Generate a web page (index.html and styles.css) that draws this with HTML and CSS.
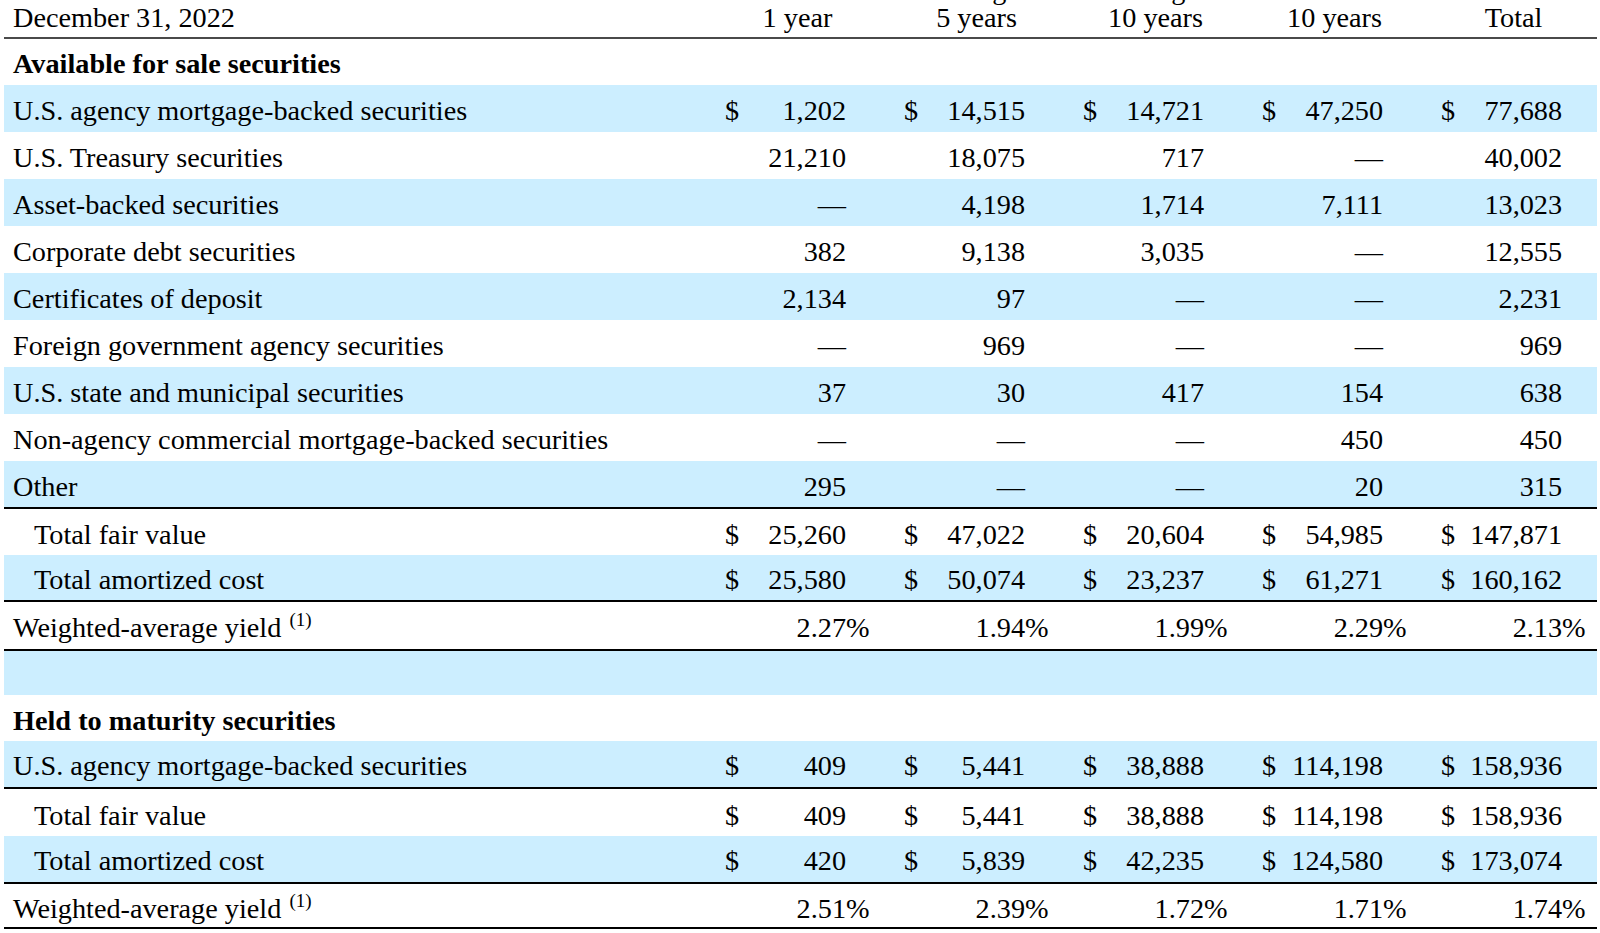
FILE: index.html
```html
<!DOCTYPE html>
<html lang="en">
<head>
<meta charset="utf-8">
<title>Investment securities maturities</title>
<link rel="stylesheet" href="styles.css">
</head>
<body>
<div class="sheet">
<table class="fin">
<colgroup>
<col class="c-lbl">
<col class="c-cur"><col class="c-num"><col class="c-pct">
<col class="c-cur"><col class="c-num"><col class="c-pct">
<col class="c-cur"><col class="c-num"><col class="c-pct">
<col class="c-cur"><col class="c-num"><col class="c-pct">
<col class="c-cur"><col class="c-num"><col class="c-pct-last">
</colgroup>
<thead>
<tr>
<th class="hd-lbl">December 31, 2022</th>
<th class="hd" colspan="3">Within<br>1 year</th>
<th class="hd" colspan="3">After 1 year<br>through<br>5 years</th>
<th class="hd" colspan="3">After 5 years<br>through<br>10 years</th>
<th class="hd" colspan="3">After<br>10 years</th>
<th class="hd hd-last" colspan="3">Total</th>
</tr>
</thead>
<tbody>
<tr class="r-sec"><td class="lbl b" colspan="16">Available for sale securities</td></tr>
<tr class="hl"><td class="lbl">U.S. agency mortgage-backed securities</td>
<td class="cur">$</td><td class="num">1,202</td><td class="pct"></td>
<td class="cur">$</td><td class="num">14,515</td><td class="pct"></td>
<td class="cur">$</td><td class="num">14,721</td><td class="pct"></td>
<td class="cur">$</td><td class="num">47,250</td><td class="pct"></td>
<td class="cur">$</td><td class="num">77,688</td><td class="pct"></td></tr>
<tr><td class="lbl">U.S. Treasury securities</td>
<td class="cur"></td><td class="num">21,210</td><td class="pct"></td>
<td class="cur"></td><td class="num">18,075</td><td class="pct"></td>
<td class="cur"></td><td class="num">717</td><td class="pct"></td>
<td class="cur"></td><td class="num">—</td><td class="pct"></td>
<td class="cur"></td><td class="num">40,002</td><td class="pct"></td></tr>
<tr class="hl"><td class="lbl">Asset-backed securities</td>
<td class="cur"></td><td class="num">—</td><td class="pct"></td>
<td class="cur"></td><td class="num">4,198</td><td class="pct"></td>
<td class="cur"></td><td class="num">1,714</td><td class="pct"></td>
<td class="cur"></td><td class="num">7,111</td><td class="pct"></td>
<td class="cur"></td><td class="num">13,023</td><td class="pct"></td></tr>
<tr><td class="lbl">Corporate debt securities</td>
<td class="cur"></td><td class="num">382</td><td class="pct"></td>
<td class="cur"></td><td class="num">9,138</td><td class="pct"></td>
<td class="cur"></td><td class="num">3,035</td><td class="pct"></td>
<td class="cur"></td><td class="num">—</td><td class="pct"></td>
<td class="cur"></td><td class="num">12,555</td><td class="pct"></td></tr>
<tr class="hl"><td class="lbl">Certificates of deposit</td>
<td class="cur"></td><td class="num">2,134</td><td class="pct"></td>
<td class="cur"></td><td class="num">97</td><td class="pct"></td>
<td class="cur"></td><td class="num">—</td><td class="pct"></td>
<td class="cur"></td><td class="num">—</td><td class="pct"></td>
<td class="cur"></td><td class="num">2,231</td><td class="pct"></td></tr>
<tr><td class="lbl">Foreign government agency securities</td>
<td class="cur"></td><td class="num">—</td><td class="pct"></td>
<td class="cur"></td><td class="num">969</td><td class="pct"></td>
<td class="cur"></td><td class="num">—</td><td class="pct"></td>
<td class="cur"></td><td class="num">—</td><td class="pct"></td>
<td class="cur"></td><td class="num">969</td><td class="pct"></td></tr>
<tr class="hl"><td class="lbl">U.S. state and municipal securities</td>
<td class="cur"></td><td class="num">37</td><td class="pct"></td>
<td class="cur"></td><td class="num">30</td><td class="pct"></td>
<td class="cur"></td><td class="num">417</td><td class="pct"></td>
<td class="cur"></td><td class="num">154</td><td class="pct"></td>
<td class="cur"></td><td class="num">638</td><td class="pct"></td></tr>
<tr><td class="lbl">Non-agency commercial mortgage-backed securities</td>
<td class="cur"></td><td class="num">—</td><td class="pct"></td>
<td class="cur"></td><td class="num">—</td><td class="pct"></td>
<td class="cur"></td><td class="num">—</td><td class="pct"></td>
<td class="cur"></td><td class="num">450</td><td class="pct"></td>
<td class="cur"></td><td class="num">450</td><td class="pct"></td></tr>
<tr class="hl rule r-other"><td class="lbl">Other</td>
<td class="cur"></td><td class="num">295</td><td class="pct"></td>
<td class="cur"></td><td class="num">—</td><td class="pct"></td>
<td class="cur"></td><td class="num">—</td><td class="pct"></td>
<td class="cur"></td><td class="num">20</td><td class="pct"></td>
<td class="cur"></td><td class="num">315</td><td class="pct"></td></tr>
<tr class="r-tfv"><td class="lbl ind">Total fair value</td>
<td class="cur">$</td><td class="num">25,260</td><td class="pct"></td>
<td class="cur">$</td><td class="num">47,022</td><td class="pct"></td>
<td class="cur">$</td><td class="num">20,604</td><td class="pct"></td>
<td class="cur">$</td><td class="num">54,985</td><td class="pct"></td>
<td class="cur">$</td><td class="num">147,871</td><td class="pct"></td></tr>
<tr class="hl rule r-tac"><td class="lbl ind">Total amortized cost</td>
<td class="cur">$</td><td class="num">25,580</td><td class="pct"></td>
<td class="cur">$</td><td class="num">50,074</td><td class="pct"></td>
<td class="cur">$</td><td class="num">23,237</td><td class="pct"></td>
<td class="cur">$</td><td class="num">61,271</td><td class="pct"></td>
<td class="cur">$</td><td class="num">160,162</td><td class="pct"></td></tr>
<tr class="rule r-way"><td class="lbl">Weighted-average yield <sup class="fn">(1)</sup></td>
<td class="cur"></td><td class="num">2.27</td><td class="pct">%</td>
<td class="cur"></td><td class="num">1.94</td><td class="pct">%</td>
<td class="cur"></td><td class="num">1.99</td><td class="pct">%</td>
<td class="cur"></td><td class="num">2.29</td><td class="pct">%</td>
<td class="cur"></td><td class="num">2.13</td><td class="pct">%</td></tr>
<tr class="hl r-gap"><td colspan="16"></td></tr>
<tr class="r-sec2"><td class="lbl b" colspan="16">Held to maturity securities</td></tr>
<tr class="hl rule r-htm"><td class="lbl">U.S. agency mortgage-backed securities</td>
<td class="cur">$</td><td class="num">409</td><td class="pct"></td>
<td class="cur">$</td><td class="num">5,441</td><td class="pct"></td>
<td class="cur">$</td><td class="num">38,888</td><td class="pct"></td>
<td class="cur">$</td><td class="num">114,198</td><td class="pct"></td>
<td class="cur">$</td><td class="num">158,936</td><td class="pct"></td></tr>
<tr class="r-tfv2"><td class="lbl ind">Total fair value</td>
<td class="cur">$</td><td class="num">409</td><td class="pct"></td>
<td class="cur">$</td><td class="num">5,441</td><td class="pct"></td>
<td class="cur">$</td><td class="num">38,888</td><td class="pct"></td>
<td class="cur">$</td><td class="num">114,198</td><td class="pct"></td>
<td class="cur">$</td><td class="num">158,936</td><td class="pct"></td></tr>
<tr class="hl rule r-tac2"><td class="lbl ind">Total amortized cost</td>
<td class="cur">$</td><td class="num">420</td><td class="pct"></td>
<td class="cur">$</td><td class="num">5,839</td><td class="pct"></td>
<td class="cur">$</td><td class="num">42,235</td><td class="pct"></td>
<td class="cur">$</td><td class="num">124,580</td><td class="pct"></td>
<td class="cur">$</td><td class="num">173,074</td><td class="pct"></td></tr>
<tr class="rule r-way2"><td class="lbl">Weighted-average yield <sup class="fn">(1)</sup></td>
<td class="cur"></td><td class="num">2.51</td><td class="pct">%</td>
<td class="cur"></td><td class="num">2.39</td><td class="pct">%</td>
<td class="cur"></td><td class="num">1.72</td><td class="pct">%</td>
<td class="cur"></td><td class="num">1.71</td><td class="pct">%</td>
<td class="cur"></td><td class="num">1.74</td><td class="pct">%</td></tr>
</tbody>
</table>
</div>
</body>
</html>
```
FILE: styles.css
```css
html, body {
  margin: 0;
  padding: 0;
  background: #ffffff;
}

body {
  font-family: "Liberation Serif", "Times New Roman", serif;
  color: #000000;
  overflow: hidden;
}

.sheet {
  margin: -52px 3px 0 4px;
}

.fin {
  width: 1593px;
  table-layout: fixed;
  border-collapse: separate;
  border-spacing: 0;
  font-size: 28.25px;
}

.c-lbl { width: 687px; }
.c-cur { width: 54px; }
.c-num { width: 101px; }
.c-pct { width: 24px; }
.c-pct-last { width: 35px; }

.fin th {
  font-weight: normal;
  vertical-align: bottom;
  line-height: 28px;
  padding: 0 0 5px 0;
  border-bottom: 2px solid #4a4a4a;
  white-space: nowrap;
}

.fin th.hd-lbl {
  text-align: left;
  padding-left: 9px;
}

.fin th.hd {
  text-align: center;
  padding-left: 34px;
}

.fin th.hd-last {
  padding-right: 11px;
}

.fin td {
  padding: 5px 0 0 0;
  line-height: 42px;
  white-space: nowrap;
  vertical-align: middle;
}

.fin tr.hl td {
  background: #cceeff;
}

.fin tr.rule td {
  border-bottom: 2px solid #000000;
}

.fin td.lbl { padding-left: 9px; }
.fin td.lbl.ind { padding-left: 30px; }
.fin td.b { font-weight: bold; }

.fin td.cur {
  padding-left: 34px;
  text-align: left;
}

.fin td.num { text-align: right; }
.fin td.pct { text-align: left; }

.fn {
  font-size: 19px;
  line-height: 0;
  vertical-align: 11px;
  margin-left: 1px;
}

.fin tr.r-sec td { padding-top: 4px; line-height: 42px; }
.fin tr.r-other td { padding-top: 5px; line-height: 41px; }
.fin tr.r-tfv td { padding-top: 5px; line-height: 41px; }
.fin tr.r-tac td { padding-top: 5px; line-height: 40px; }
.fin tr.r-way td { padding-top: 5px; line-height: 42px; }
.fin tr.r-gap td { padding-top: 0; line-height: 44px; height: 44px; }
.fin tr.r-sec2 td { padding-top: 6px; line-height: 40px; }
.fin tr.r-htm td { padding-top: 4px; line-height: 42px; }
.fin tr.r-tfv2 td { padding-top: 6px; line-height: 41px; }
.fin tr.r-tac2 td { padding-top: 3px; line-height: 43px; }
.fin tr.r-way2 td { padding-top: 7px; line-height: 36px; }
```
